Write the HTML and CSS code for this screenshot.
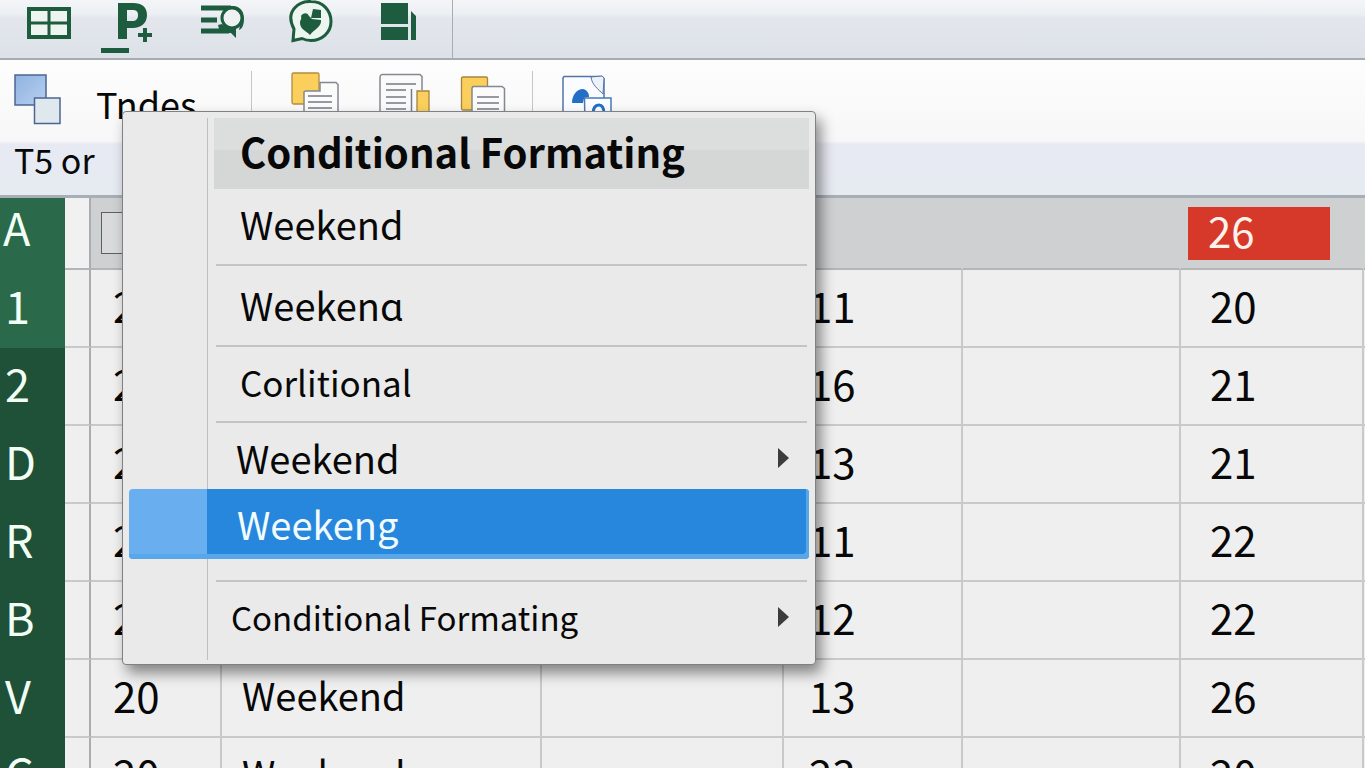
FILE: index.html
```html
<!DOCTYPE html>
<html lang="en">
<head>
<meta charset="utf-8">
<title>Conditional Formating</title>
<link rel="stylesheet" href="styles.css">
</head>
<body>
<div class="app">
  <header class="tabs">
    <button class="icon-btn" aria-label="Table"><svg viewBox="8 0 64 58"><path fill="#eef5f0" stroke="#1d5c3e" stroke-width="4" d="M29 9h40v28H29z"/><path stroke="#1d5c3e" stroke-width="3" d="M49 9v28M29 23h40"/></svg></button>
    <button class="icon-btn" aria-label="Paragraph"><svg viewBox="97 0 64 58"><path fill="#1d5c3e" fill-rule="evenodd" d="M118 3h15c9 0 14 4 14 12s-6 13-14 13h-6v11h-9zM127 10v11h5c4 0 6-2 6-6s-2-5-6-5zM143 28h4v5h5v4h-5v5h-4v-5h-5v-4h5zM101 48h28v5h-28z"/></svg></button>
    <button class="icon-btn" aria-label="Find"><svg viewBox="186 0 64 58"><path fill="none" stroke="#1d5c3e" stroke-width="5" d="M201 8h30M201 20h16M201 31h28"/><circle cx="232" cy="18" r="10" fill="#edf1f1" stroke="#1d5c3e" stroke-width="3"/><path fill="#1d5c3e" d="M220 6h14c7 1 10 6 10 13 0 6-2 10-5 11l1-5c4-7 1-16-6-17h-9zM218 25l4-1c4 4 9 5 14 3v11l-5-5h-11z"/></svg></button>
    <button class="icon-btn" aria-label="Comment"><svg viewBox="275 0 64 58"><path fill="#edf5f0" stroke="#1d5c3e" stroke-width="3" d="M294 29C284 10 300 1 311 1.500c12 0 20 9 20 20s-9 19-20 19c-4 0-7-1-9-2l-9 2z"/><path fill="#1d5c3e" d="M313 9l8 1v8h-10zM301 16c2-3 6-4 8 0l3 3 9 1c1 7-8 10-11 15-4-4-10-6-10-12 0-3 2-4 1-7z"/></svg></button>
    <button class="icon-btn" aria-label="Panels"><svg viewBox="364 0 64 58"><path fill="#1d5c3e" d="M381 3h27v21h-27zM381 27h27v13h-27zM411 11l5 5v24h-5z"/></svg></button>
    <span class="tabs-end"></span>
  </header>

  <section class="ribbon">
    <div class="tools">
      <button class="tool" aria-label="Arrange"><svg viewBox="12 60 60 82"><defs><linearGradient id="sq" x1="0" y1="0" x2="1" y2="1"><stop offset="0" stop-color="#8fb3e0"/><stop offset="1" stop-color="#b7cff0"/></linearGradient></defs><path fill="url(#sq)" stroke="#4b6592" stroke-width="1.500" d="M15 75h31v30H15z"/><path fill="#dfe9ed" stroke="#4b6592" stroke-width="1.500" d="M34.500 98H60v25.500H34.500z"/></svg></button>
      <button class="tool-label">Tndes</button>
      <span class="rule"></span>
      <div class="tool-group">
        <button class="tool" aria-label="Paste"><svg viewBox="287 60 60 82"><rect x="292" y="73" width="27" height="31" rx="1.500" fill="#fbcf5b" stroke="#b38d3c" stroke-width="1.300"/><path fill="#fbfbfc" stroke="#85888e" stroke-width="1.500" d="M320 82.500h16l2 2V130h-34V92q0-1 2-1h14z"/><path stroke="#767a82" stroke-width="1.500" d="M308 96h24M308 102h24M308 108h24"/></svg></button>
        <button class="tool" aria-label="Document"><svg viewBox="372 60 60 82"><path fill="#fafafa" stroke="#85888e" stroke-width="1.500" d="M422 90V76.500l-2-2h-38q-2 .5-2 2.500v53h33"/><path stroke="#767a82" stroke-width="1.500" d="M386 84h30M386 90h20M386 97h20M386 103h20M386 109h20M411.500 89v30"/><path fill="#fbcf5b" stroke="#a58443" stroke-width="1.300" d="M417 91h12v36h-12z"/></svg></button>
        <button class="tool" aria-label="Copy"><svg viewBox="457 60 60 82"><rect x="461.500" y="77" width="26" height="33" rx="1.500" fill="#fbcf5b" stroke="#a58443" stroke-width="1.300"/><path fill="#fbfbfc" stroke="#85888e" stroke-width="1.500" d="M473 86.500h29l2.500 2V130H472V88z"/><path stroke="#767a82" stroke-width="1.500" d="M477 97h22M477 103h22M477 109h22"/></svg></button>
      </div>
      <span class="rule"></span>
      <button class="tool tool-picture" aria-label="Picture"><svg viewBox="557 60 60 82"><path fill="#fafcff" stroke="#5275a8" stroke-width="1.500" d="M564 76.500h38l2 2V130h-41V78z"/><path fill="#edf1f8" stroke="#5275a8" d="M591 77c1 8 7 12 12 17l1-16-2-2z"/><path fill="#236fc5" d="M572 103c0-8 5-14 11-14 4 1 6 4 6 8-6 0-5 2-6 6z"/><path fill="#fafcff" stroke="#4979b5" stroke-width="1.500" d="M584.500 98H611v30h-26z"/><path fill="none" stroke="#236fc5" stroke-width="3" d="M593 114c0-7 3-9 6-9s5 3 5 9"/></svg></button>
    </div>
    <div class="name-box">T5 or</div>
  </section>

  <main class="sheet">
    <table class="grid">
      <colgroup><col class="c-head"><col class="c-gutter"><col class="c-a"><col class="c-b"><col class="c-c"><col class="c-d"><col class="c-e"><col class="c-f"><col class="c-g"></colgroup>
      <tbody>
        <tr class="top"><th scope="row">A</th><td></td><td class="check-cell"><input type="checkbox" aria-label="Select row" class="check"></td><td></td><td></td><td></td><td></td><td class="flag-cell"><span class="flag">26</span></td><td></td></tr>
        <tr><th scope="row">1</th><td></td><td>20</td><td></td><td></td><td>11</td><td></td><td>20</td><td></td></tr>
        <tr class="dark"><th scope="row">2</th><td></td><td>20</td><td></td><td></td><td>16</td><td></td><td>21</td><td></td></tr>
        <tr class="dark"><th scope="row">D</th><td></td><td>20</td><td></td><td></td><td>13</td><td></td><td>21</td><td></td></tr>
        <tr class="dark"><th scope="row">R</th><td></td><td>20</td><td></td><td></td><td>11</td><td></td><td>22</td><td></td></tr>
        <tr class="dark"><th scope="row">B</th><td></td><td>20</td><td></td><td></td><td>12</td><td></td><td>22</td><td></td></tr>
        <tr class="dark"><th scope="row">V</th><td></td><td>20</td><td class="word">Weekend</td><td></td><td>13</td><td></td><td>26</td><td></td></tr>
        <tr class="dark"><th scope="row">C</th><td></td><td>20</td><td class="word">Weekend</td><td></td><td>23</td><td></td><td>20</td><td></td></tr>
      </tbody>
    </table>
  </main>

  <nav class="menu" aria-label="Conditional Formating">
    <h1 class="menu-title">Conditional Formating</h1>
    <button class="item">Weekend</button>
    <button class="item ruled low">Weekenɑ</button>
    <button class="item ruled small">Corlitional</button>
    <button class="item ruled short">Weekend<svg class="arrow" viewBox="0 0 12 22"><path d="M1 1l11 10L1 21z"/></svg></button>
    <button class="item selected">Weekeng</button>
    <button class="item ruled last">Conditional Formating<svg class="arrow" viewBox="0 0 12 22"><path d="M1 1l11 10L1 21z"/></svg></button>
  </nav>
</div>
</body>
</html>
```
FILE: styles.css
```css
* { box-sizing: border-box; }

body {
  margin: 0;
  font-family: "Noto Sans CJK SC", "Noto Sans", sans-serif;
  color: #080808;
  background: #efefef;
}

button {
  margin: 0;
  padding: 0;
  border: 0;
  background: none;
  font: inherit;
  color: inherit;
  text-align: left;
}

svg { display: block; }

.app {
  position: relative;
  height: 100vh;
  overflow: hidden;
}

/* Top strip */
.tabs {
  display: flex;
  gap: 25px;
  height: 60px;
  padding-left: 8px;
  border-bottom: 2px solid #a8acb2;
  background: linear-gradient(#f4f5f8 0, #eceff3 14px, #e3e7ed 18px, #dde2e8 100%);
}

.icon-btn { width: 64px; height: 58px; }
.tabs-end { width: 1px; margin-left: -1px; background: #a8adb5; }

/* Ribbon */
.ribbon {
  border-bottom: 3px solid #a8aeb8;
  background: linear-gradient(#fdfdfd 0, #f7f7f8 81px, #e7eaf2 84px, #e6eaf1 100%);
}

.tools { display: flex; height: 82px; padding-left: 12px; }
.tool { width: 60px; height: 82px; }
.tool-label {
  width: 179px;
  padding: 4px 0 0 24px;
  font-size: 36px;
  line-height: 74px;
}
.rule { width: 1px; margin-top: 11px; background: #c4c6ca; }
.tool-group { display: flex; gap: 25px; padding: 0 15px 0 35px; }
.tool-picture { margin-left: 24px; }
.name-box {
  height: 53px;
  padding-left: 14px;
  font-size: 34px;
  line-height: 36px;
}

/* Spreadsheet */
.grid {
  width: 100%;
  table-layout: fixed;
  border-collapse: separate;
  border-spacing: 0;
  font-size: 42px;
  line-height: 48px;
}

.c-head { width: 65px; }
.c-gutter { width: 26px; }
.c-a { width: 131px; }
.c-b { width: 320px; }
.c-c { width: 242px; }
.c-d { width: 179px; }
.c-e { width: 218px; }
.c-f { width: 183px; }
.c-g { width: 1px; }

.grid th,
.grid td {
  height: 78px;
  padding: 0 0 6px 22px;
  border-right: 2px solid #c8c9ca;
  border-bottom: 2px solid #c8c9ca;
  white-space: nowrap;
  text-align: left;
}

.grid td:nth-child(2) { padding: 0; border-right-color: #aaacae; }
.grid td:nth-child(6) { padding-left: 25px; }
.grid td:nth-child(8) { padding-left: 29px; }
.grid td:last-child { padding: 0; border-right: 0; }

.grid th {
  padding: 0 0 8px 5px;
  border: 0;
  background: #2a6a4b;
  color: #f2fff5;
  font-size: 45px;
  font-weight: 400;
}

.grid .dark th { background: #1f5138; }
.grid .word { padding-left: 20px; font-size: 38px; }

.grid .top th,
.grid .top td { height: 72px; }
.grid .top th { padding: 0 0 14px 3px; }
.grid .top td { border-right-color: transparent; border-bottom-color: #b3b5b7; background: #cfd0d2; }
.grid .top td:nth-child(2) { border-right-color: #aaacae; background: #f1f1f2; }
.grid .top .check-cell { padding: 0 0 0 10px; }
.grid .top .flag-cell { padding: 0 32px 0 7px; }

.check {
  display: block;
  width: 42px;
  height: 42px;
  margin: 0;
  appearance: none;
  border: 1px solid #53665e;
  background: #d9dadb;
}

.flag {
  display: block;
  height: 53px;
  padding-left: 20px;
  background: #d6382a;
  color: #fff1eb;
  line-height: 46px;
}

/* Menu */
.menu {
  position: absolute;
  top: 111px;
  left: 122px;
  display: flex;
  flex-direction: column;
  width: 694px;
  padding: 6px;
  border: 1px solid #7f8183;
  border-radius: 4px;
  background: #eaeaea;
  box-shadow: 5px 8px 14px rgba(0, 0, 0, .45);
  font-size: 38px;
  line-height: 48px;
}

.menu::before {
  content: "";
  position: absolute;
  top: 6px;
  bottom: 4px;
  left: 84px;
  width: 1px;
  background: #bdbec0;
}

.menu-title {
  height: 71px;
  margin: 0 0 0 85px;
  padding: 9px 0 0 26px;
  background: linear-gradient(#dcdddd 32px, #d5d6d6 32px);
  font-size: 40px;
  font-weight: 700;
  line-height: 48px;
}

.item {
  position: relative;
  display: flex;
  align-items: center;
  height: 75px;
  padding: 0 20px 6px 111px;
}

.ruled::before {
  content: "";
  position: absolute;
  top: 0;
  right: 2px;
  left: 87px;
  height: 2px;
  background: #c3c4c5;
}

.low { height: 81px; padding-bottom: 0; }
.small { height: 76px; padding-bottom: 2px; font-size: 35px; }
.short { height: 68px; padding: 6px 20px 0 107px; }
.last { height: 78px; margin-top: 21px; padding: 0 20px 4px 102px; font-size: 33px; }
.arrow { width: 12px; height: 22px; margin-left: auto; fill: #3c3c3c; }

.selected {
  height: 70px;
  padding: 0 0 0 108px;
  border-radius: 4px;
  background: linear-gradient(90deg, #69afef 78px, #2787dc 78px);
  box-shadow: inset -3px -5px 0 #59a7eb;
  color: #f2fcff;
}
```
